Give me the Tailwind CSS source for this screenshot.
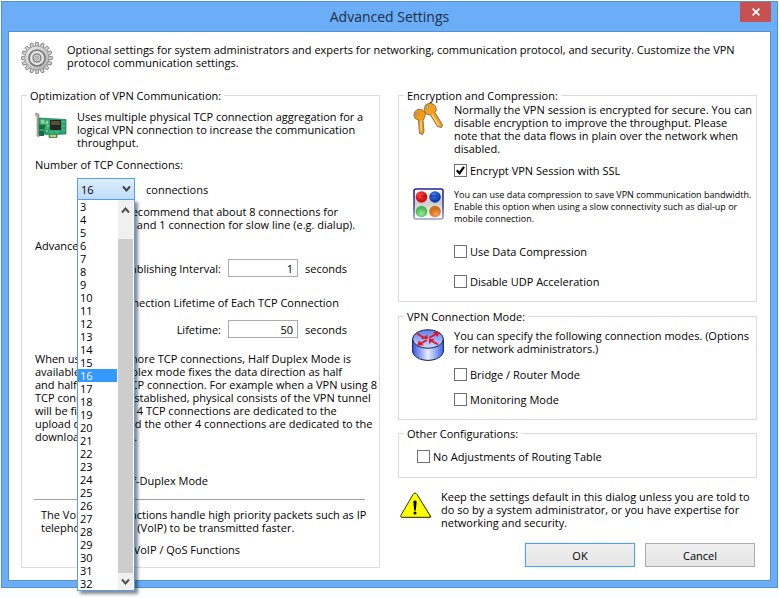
<!DOCTYPE html>
<html lang="en">
<head>
    <meta charset="UTF-8">
    <meta name="viewport" content="width=device-width, initial-scale=1.0">
    <script src="https://cdn.jsdelivr.net/npm/@tailwindcss/browser@4"></script>
    <title>Advanced Settings</title>
</head>
<body class="min-h-screen bg-[#fcfdfe] p-px font-['Open_Sans','Noto_Sans',sans-serif] text-[11px] leading-[13px] text-black">
    <div class="border border-[#5590cf] bg-[#6badf6] px-[6px] pb-[6px]">
        <!-- Title bar -->
        <header class="grid grid-cols-[1fr_auto_1fr] items-start h-[29px]">
            <h1 class="col-start-2 pt-[5px] text-[14px] leading-5 text-[#1d3047]">Advanced Settings</h1>
            <button type="button" aria-label="Close" class="justify-self-end flex h-5 w-[31px] items-center justify-center bg-[#c75050]">
                <svg class="h-2 w-2" viewBox="0 0 8 8" stroke="#fff" stroke-width="1.7"><path d="M.6.6l6.8 6.8M7.4.6L.6 7.4"/></svg>
            </button>
        </header>

        <main class="border border-[#5590cf] bg-white pl-3 pr-[13px] pt-[10px] pb-3">
            <div class="flex gap-[14px]">
                <svg class="h-8 w-8 shrink-0" viewBox="0 0 32 32">
                    <defs>
                        <linearGradient id="gear" x1="0" y1="0" x2="1" y2="1"><stop offset="0" stop-color="#f2f2f2"/><stop offset="1" stop-color="#aaa"/></linearGradient>
                    </defs>
                    <g id="teeth" fill="#d2d2d2" stroke="#777" stroke-width=".8"></g>
                    <circle cx="16" cy="16" r="12" fill="url(#gear)" stroke="#888" stroke-width=".6"/>
                    <circle cx="16" cy="16" r="8" fill="#ddd" stroke="#777" stroke-width="1.6"/>
                    <circle cx="16" cy="16" r="6" fill="#c8c8c8" stroke="#eee" stroke-width="1"/>
                    <circle cx="16" cy="16" r="4" fill="#e2e2e2" stroke="#777" stroke-width="1"/>
                    <circle cx="16" cy="16" r="2.2" fill="#bbb" stroke="#999" stroke-width=".6"/>
                </svg>
                <p class="pt-px">Optional settings for system administrators and experts for networking, communication protocol, and security. Customize the VPN<br>protocol communication settings.</p>
            </div>

            <div class="mt-[15px] grid grid-cols-2 gap-[18px]">
                <!-- Left column -->
                <fieldset class="min-w-0 border border-[#dcdcdc] px-[13px]">
                    <legend class="-ml-2 px-[3px]">Optimization of VPN Communication:</legend>
                    <div class="mt-2 flex gap-[10px]">
                        <svg class="h-8 w-8 shrink-0" viewBox="0 0 32 32">
                            <path d="M1 3l3 1v23l-2-1V6L0 5z" fill="#b5aaa0" stroke="#786c62" stroke-width=".5"/>
                            <path d="M4 8l27 1.500v14.500l-9 .5v3h-8v-3L4 24z" fill="#2aa36c" stroke="#1c7a50" stroke-width=".7"/>
                            <path d="M15 25h6v2h-6z" fill="#dfc04e"/>
                            <path d="M4 15h6v4H4zM4 21h5v5H4z" fill="#176d48"/>
                            <path d="M15 10h11v10H15z" fill="#20262a"/>
                            <path d="M16 12h9M16 14h9" stroke="#9b7b2e"/>
                            <path d="M6 10h3v2H6zM11 11h2v3h-2zM10 18h3M27 12h3M27 16h3M27 20h3M15 22h3M20 22h4" fill="#8fd8a8" stroke="#7fcfa0" stroke-width=".7"/>
                            <path d="M6 13h4M11 21h2M12 16h2" stroke="#d7e86a"/>
                        </svg>
                        <p class="whitespace-nowrap">Uses multiple physical TCP connection aggregation for a<br>logical VPN connection to increase the communication<br>throughput.</p>
                    </div>

                    <label for="tcp" class="mt-[9px] block">Number of TCP Connections:</label>
                    <div class="mt-[7px] ml-[42px] flex items-center gap-[11px]">
                        <div class="relative grid w-[58px]">
                            <select id="tcp" class="col-start-1 row-start-1 h-[22px] appearance-none border border-[#569de5] bg-linear-to-b from-[#deedfc] to-[#bcdcfa] pl-[3px] text-[11px]">
                                <option>16</option>
                            </select>
                            <svg class="pointer-events-none col-start-1 row-start-1 mr-1 h-2 w-[9px] self-center justify-self-end" viewBox="0 0 9 8" fill="none" stroke="#444" stroke-width="2"><path d="M1 1.500l3.500 4 3.500-4"/></svg>

                            <!-- Open list -->
                            <div class="absolute top-[21px] left-0 z-10 flex w-full border border-[#569de5] bg-white shadow-[3px_3px_3px_rgba(0,0,0,0.45)]">
                                <ul id="counts" role="listbox" aria-label="TCP connections" class="w-[39px]"></ul>
                                <div class="ml-px mr-px flex w-[15px] flex-col bg-[#f0f0f0]">
                                    <div class="flex h-[39px] justify-center pt-[6px]">
                                        <svg class="h-2 w-[9px]" viewBox="0 0 9 8" fill="none" stroke="#505050" stroke-width="2"><path d="M1 6.500l3.500-4 3.500 4"/></svg>
                                    </div>
                                    <div class="grow bg-[#cdcdcd]"></div>
                                    <div class="flex h-[17px] items-center justify-center">
                                        <svg class="h-2 w-[9px]" viewBox="0 0 9 8" fill="none" stroke="#505050" stroke-width="2"><path d="M1 1.500l3.500 4 3.500-4"/></svg>
                                    </div>
                                </div>
                            </div>
                        </div>
                        <span>connections</span>
                    </div>

                    <p class="mt-[5px] ml-[42px] -mr-2 indent-[31px] whitespace-nowrap">We recommend that about 8 connections for<br>broadband and 1 connection for slow line (e.g. dialup).</p>
                    <p class="mt-2">Advanced Settings:</p>
                    <div class="mt-[7px] flex items-center justify-end gap-[7px] pr-[19px]">
                        <label for="interval">Establishing Interval:</label>
                        <input id="interval" value="1" class="h-[18px] w-[70px] border border-[#ababab] pr-1 text-right">
                        <span>seconds</span>
                    </div>
                    <p class="mt-[19px] ml-[58px]">Set Connection Lifetime of Each TCP Connection</p>
                    <div class="mt-[11px] flex items-center justify-end gap-[7px] pr-[19px]">
                        <label for="lifetime">Lifetime:</label>
                        <input id="lifetime" value="50" class="h-[18px] w-[70px] border border-[#ababab] pr-1 text-right">
                        <span>seconds</span>
                    </div>
                    <p class="mt-[14px] -mr-3 whitespace-nowrap">When using 32 or more TCP connections, Half Duplex Mode is<br>available. A half duplex mode fixes the data direction as half<br>and half for each TCP connection. For example when a VPN using 8<br>TCP connection is established, physical consists of the VPN tunnel<br>will be fixed so that 4 TCP connections are dedicated to the<br>upload direction and the other 4 connections are dedicated to the<br>download direction.</p>
                    <label class="mt-[31px] ml-[42px] flex gap-[3px]">
                        <input type="checkbox" class="h-[13px] w-[13px] appearance-none border border-[#707070] bg-white">
                        <span>Use Half-Duplex Mode</span>
                    </label>
                    <hr class="mt-3 -ml-px mr-px border-[#a0a0a0]">
                    <p class="mt-2 ml-[6px] -mr-2 whitespace-nowrap">The VoIP / QoS functions handle high priority packets such as IP<br>telephony packets (VoIP) to be transmitted faster.</p>
                    <label class="mt-[9px] mb-[11px] ml-[42px] flex gap-[3px]">
                        <input type="checkbox" class="h-[13px] w-[13px] appearance-none border border-[#707070] bg-white">
                        <span>Disable VoIP / QoS Functions</span>
                    </label>
                </fieldset>

                <!-- Right column -->
                <div class="min-w-0">
                    <fieldset class="min-w-0 border border-[#dcdcdc] pl-[14px] pr-2">
                        <legend class="-ml-[9px] px-[3px]">Encryption and Compression:</legend>
                        <div class="mt-px flex gap-[9px]">
                            <svg class="h-8 w-8 shrink-0" viewBox="0 0 32 32" stroke="#86764f" stroke-width="1" stroke-linejoin="round">
                                <path d="M13 1.500q4-2.500 8 0 4 4 1 8l7.500 12.500-1 2.500-4-1-7-11.500q-5 0-6.500-4 0-4 2-6.500z" fill="#f3a01f"/>
                                <path d="M2 8.500q4-4 8-1 4 3 1 8l-1 2 1 11-1.500 3-3-1-1-13.500q-4-1-4.500-4 0-3 1-4.500z" fill="#f59a12"/>
                                <path d="M8 17.500v11M19 11.500l7 11" fill="none" stroke="#ffd477" stroke-width="1.400"/>
                                <circle cx="14.500" cy="4.200" r="1.300" fill="#fff"/>
                                <circle cx="4" cy="11" r="1.200" fill="#fff"/>
                            </svg>
                            <p class="whitespace-nowrap">Normally the VPN session is encrypted for secure. You can<br>disable encryption to improve the throughput. Please<br>note that the data flows in plain over the network when<br>disabled.</p>
                        </div>
                        <label class="mt-[9px] ml-[41px] flex items-center gap-[3px]">
                            <span class="grid">
                                <input type="checkbox" checked class="peer col-start-1 row-start-1 h-[13px] w-[13px] appearance-none border border-[#707070] bg-white">
                                <svg class="pointer-events-none invisible col-start-1 row-start-1 h-[13px] w-[13px] peer-checked:visible" viewBox="0 0 13 13" fill="none" stroke="#000" stroke-width="2.200"><path d="M2.800 6.300l2.700 3 4.500-6.500"/></svg>
                            </span>
                            <span>Encrypt VPN Session with SSL</span>
                        </label>
                        <div class="mt-[11px] flex gap-[9px]">
                            <svg class="h-8 w-8 shrink-0" viewBox="0 0 32 32">
                                <defs>
                                    <linearGradient id="frame" x1="0" y1="0" x2="0" y2="1"><stop offset="0" stop-color="#28208f"/><stop offset=".6" stop-color="#4a4aa5"/><stop offset="1" stop-color="#9aa0c8"/></linearGradient>
                                    <linearGradient id="panel" x1="0" y1="0" x2="0" y2="1"><stop offset="0" stop-color="#fff"/><stop offset=".45" stop-color="#ccc"/><stop offset="1" stop-color="#fff"/></linearGradient>
                                    <radialGradient id="red" cx=".4" cy=".35"><stop offset="0" stop-color="#ff4a3c"/><stop offset="1" stop-color="#d01018"/></radialGradient>
                                    <radialGradient id="blue" cx=".4" cy=".35"><stop offset="0" stop-color="#4a86ee"/><stop offset="1" stop-color="#0c3cae"/></radialGradient>
                                    <radialGradient id="green" cx=".5" cy=".7"><stop offset="0" stop-color="#8df08a"/><stop offset="1" stop-color="#4fb757"/></radialGradient>
                                    <radialGradient id="orange" cx=".6" cy=".75"><stop offset="0" stop-color="#ff9a58"/><stop offset="1" stop-color="#cc731a"/></radialGradient>
                                </defs>
                                <rect x="1" y="1" width="29" height="30" rx="2" fill="url(#panel)" stroke="url(#frame)" stroke-width="1.600"/>
                                <circle cx="8.500" cy="9" r="5.800" fill="url(#red)"/>
                                <circle cx="22" cy="9" r="5.800" fill="url(#blue)"/>
                                <circle cx="8.500" cy="23.500" r="5.800" fill="url(#green)"/>
                                <circle cx="22" cy="23.500" r="5.800" fill="url(#orange)"/>
                                <path d="M8 8h6" stroke="#8c1518"/><path d="M17 8h7" stroke="#0c307f"/>
                            </svg>
                            <p class="pt-px text-[9px] leading-3 whitespace-nowrap">You can use data compression to save VPN communication bandwidth.<br>Enable this option when using a slow connectivity such as dial-up or<br>mobile connection.</p>
                        </div>
                        <label class="mt-5 ml-[41px] flex items-center gap-[3px]">
                            <input type="checkbox" class="h-[13px] w-[13px] appearance-none border border-[#707070] bg-white">
                            <span>Use Data Compression</span>
                        </label>
                        <label class="mt-[17px] mb-[13px] ml-[41px] flex items-center gap-[3px]">
                            <input type="checkbox" class="h-[13px] w-[13px] appearance-none border border-[#707070] bg-white">
                            <span>Disable UDP Acceleration</span>
                        </label>
                    </fieldset>

                    <fieldset class="mt-2 min-w-0 border border-[#dcdcdc] pl-[13px] pr-2">
                        <legend class="-ml-2 px-[3px]">VPN Connection Mode:</legend>
                        <div class="mt-[6px] flex gap-[10px]">
                            <svg class="h-8 w-8 shrink-0" viewBox="0 0 32 32">
                                <defs>
                                    <linearGradient id="side"><stop offset="0" stop-color="#3557e0"/><stop offset=".5" stop-color="#e8efff"/><stop offset="1" stop-color="#3c62ef"/></linearGradient>
                                    <linearGradient id="top" x1="0" y1="0" x2="0" y2="1"><stop offset="0" stop-color="#5d80f0"/><stop offset="1" stop-color="#d0dcff"/></linearGradient>
                                </defs>
                                <path d="M.6 10v12c0 5 7 9.400 15.400 9.400S31.400 27 31.400 22V10z" fill="url(#side)" stroke="#16204e"/>
                                <ellipse cx="16" cy="10" rx="15.400" ry="9.300" fill="url(#top)" stroke="#16204e"/>
                                <path d="M5 4.500l8 5M26 15.500l-8-4.500M17 9l7-4M15 11l-7 4" stroke="#df1725" stroke-width="2"/>
                                <path d="M9 10h6.500V5.500zM17 15v-5h5.500zM21 3h6.500l-2 5zM5 16.500h7l-5-5z" fill="#df1725"/>
                            </svg>
                            <p class="whitespace-nowrap">You can specify the following connection modes. (Options<br>for network administrators.)</p>
                        </div>
                        <label class="mt-[7px] ml-[42px] flex items-center gap-[3px]">
                            <input type="checkbox" class="h-[13px] w-[13px] appearance-none border border-[#707070] bg-white">
                            <span>Bridge / Router Mode</span>
                        </label>
                        <label class="mt-3 mb-[13px] ml-[42px] flex items-center gap-[3px]">
                            <input type="checkbox" class="h-[13px] w-[13px] appearance-none border border-[#707070] bg-white">
                            <span>Monitoring Mode</span>
                        </label>
                    </fieldset>

                    <fieldset class="mt-[7px] min-w-0 border border-[#dcdcdc] px-[13px]">
                        <legend class="-ml-2 px-[3px]">Other Configurations:</legend>
                        <label class="mt-[10px] mb-[14px] ml-[5px] flex items-center gap-[3px]">
                            <input type="checkbox" class="h-[13px] w-[13px] appearance-none border border-[#707070] bg-white">
                            <span>No Adjustments of Routing Table</span>
                        </label>
                    </fieldset>

                    <div class="mt-3 flex gap-[9px] pl-[2px]">
                        <svg class="h-8 w-8 shrink-0" viewBox="0 0 32 32">
                            <path d="M16 4q1 0 2 2l13 20q1 2-1 2H3q-2 0-1-2L14 6q1-2 2-2z" fill="#858540"/>
                            <path d="M15 3q1 0 2 1.500l13 21q.5 1.800-1 1.800H1.800q-1.500 0-1-1.800L13 4.500Q14 3 15 3z" fill="#ff0" stroke="#333300"/>
                            <path d="M13.300 11.500q1.700-2 3.400 0L15.800 20.500h-1.600z"/><circle cx="15" cy="23" r="1.500"/>
                        </svg>
                        <p class="whitespace-nowrap">Keep the settings default in this dialog unless you are told to<br>do so by a system administrator, or you have expertise for<br>networking and security.</p>
                    </div>
                    <div class="mt-[14px] mr-[2px] flex justify-end gap-[10px]">
                        <button type="button" class="h-6 w-[110px] border border-[#569de5] bg-linear-to-b from-[#f0f0f0] to-[#e5e5e5] shadow-[0_0_2px_#b8e4fa]">OK</button>
                        <button type="button" class="h-6 w-[110px] border border-[#acacac] bg-linear-to-b from-[#f0f0f0] to-[#e5e5e5]">Cancel</button>
                    </div>
                </div>
            </div>
        </main>
    </div>
<script>
    // Fill the open list
    const list = document.getElementById('counts');
    for (let i = 3; i <= 32; i++) {
        const item = document.createElement('li');
        item.setAttribute('role', 'option');
        item.className = i === 16 ? 'bg-[#3399ff] pl-[2px] text-white' : 'pl-[2px]';
        item.textContent = i;
        list.appendChild(item);
    }

    // Gear teeth
    const teeth = document.getElementById('teeth');
    for (let i = 0; i < 16; i++) {
        const tooth = document.createElementNS('http://www.w3.org/2000/svg', 'path');
        tooth.setAttribute('d', 'M14 5l.8-4.600h2.400L18 5z');
        tooth.setAttribute('transform', `rotate(${i * 22.5} 16 16)`);
        teeth.appendChild(tooth);
    }
</script>
</body>
</html>
